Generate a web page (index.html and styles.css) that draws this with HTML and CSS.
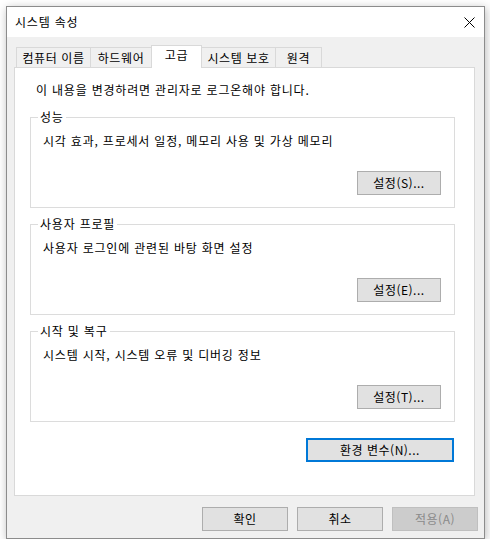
FILE: index.html
```html
<!DOCTYPE html>
<html lang="ko">
<head>
<meta charset="utf-8">
<title>시스템 속성</title>
<link rel="stylesheet" href="styles.css">
</head>
<body>
<div class="window">
  <div class="titlebar">
    <span class="title">시스템 속성</span>
    <svg class="close" width="11" height="11" viewBox="0 0 11 11" aria-hidden="true">
      <path d="M0.5 0.5 L10.5 10.5 M10.5 0.5 L0.5 10.5" stroke="#000" stroke-width="1" fill="none"/>
    </svg>
  </div>
  <div class="body">
    <div class="tabs">
      <div class="tab tab--w1">컴퓨터 이름</div>
      <div class="tab tab--w2">하드웨어</div>
      <div class="tab tab--w3 tab--active">고급</div>
      <div class="tab tab--w4">시스템 보호</div>
      <div class="tab tab--w5">원격</div>
    </div>
    <div class="panel">
      <p class="intro">이 내용을 변경하려면 관리자로 로그온해야 합니다.</p>
      <div class="group group--first">
        <div class="group-title">성능</div>
        <div class="group-desc">시각 효과, 프로세서 일정, 메모리 사용 및 가상 메모리</div>
        <button class="btn group-btn">설정(S)...</button>
      </div>
      <div class="group">
        <div class="group-title">사용자 프로필</div>
        <div class="group-desc">사용자 로그인에 관련된 바탕 화면 설정</div>
        <button class="btn group-btn">설정(E)...</button>
      </div>
      <div class="group">
        <div class="group-title">시작 및 복구</div>
        <div class="group-desc">시스템 시작, 시스템 오류 및 디버깅 정보</div>
        <button class="btn group-btn">설정(T)...</button>
      </div>
      <div class="env-row">
        <button class="btn btn--focus env-btn">환경 변수(N)...</button>
      </div>
    </div>
  </div>
  <div class="footer">
    <button class="btn footer-btn">확인</button>
    <button class="btn footer-btn">취소</button>
    <button class="btn footer-btn btn--disabled">적용(A)</button>
  </div>
</div>
</body>
</html>
```

FILE: styles.css
```css
body {
  margin: 0;
  background: #ffffff;
  font-family: "Noto Sans CJK KR", "Noto Sans", sans-serif;
  font-size: 12px;
  letter-spacing: 0.8px;
  color: #000;
}

.window {
  box-sizing: border-box;
  width: 479px;
  height: 533px;
  margin: 6px 0 0 6px;
  border: 1px solid #8c8c8c;
  background: #f0f0f0;
  box-shadow: 1px 2px 9px rgba(0, 0, 0, 0.28);
  display: flex;
  flex-direction: column;
}

.titlebar {
  height: 30px;
  background: #fff;
  display: flex;
  align-items: center;
  justify-content: space-between;
  padding: 0 9px 0 8px;
  flex: 0 0 auto;
}

.title {
  line-height: 16px;
}

.close {
  display: block;
}

.body {
  display: flex;
  flex-direction: column;
  padding: 8px 9px 0 7px;
}

.tabs {
  display: flex;
  align-items: flex-end;
  height: 22px;
  margin-left: 2px;
}

.tab {
  box-sizing: border-box;
  height: 20px;
  border: 1px solid #d9d9d9;
  border-bottom: none;
  background: #f0f0f0;
  line-height: 19px;
  text-align: center;
  white-space: nowrap;
  letter-spacing: 0.6px;
}

.tab + .tab {
  margin-left: -1px;
}

.tab--w1 { width: 75px; }
.tab--w2 { width: 62px; }
.tab--w3 { width: 51px; }
.tab--w4 { width: 75px; }
.tab--w5 { width: 47px; }

.tab--active {
  height: 23px;
  margin-bottom: -1px;
  background: #fff;
  line-height: 17px;
  position: relative;
  z-index: 1;
}

.panel {
  box-sizing: border-box;
  height: 429px;
  background: #fff;
  border: 1px solid #d9d9d9;
  padding: 14px 19px 0 15px;
}

.intro {
  margin: 0 0 0 6px;
  line-height: 16px;
}

.group {
  box-sizing: border-box;
  height: 91px;
  margin-top: 16px;
  border: 1px solid #dcdcdc;
  display: flex;
  flex-direction: column;
  align-items: flex-start;
  padding: 0 13px 12px 12px;
}

.group--first {
  margin-top: 19px;
}

.group-title {
  margin: -9px 0 0 -5px;
  padding: 0 2px;
  background: #fff;
  line-height: 16px;
}

.group-desc {
  margin-top: 8px;
  line-height: 16px;
}

.btn {
  font: inherit;
  letter-spacing: 0.5px;
  box-sizing: border-box;
  height: 24px;
  line-height: 16px;
  padding: 0;
  background: #e1e1e1;
  border: 1px solid #adadad;
  color: #000;
}

.group-btn {
  width: 84px;
  margin-top: auto;
  align-self: flex-end;
}

.env-row {
  display: flex;
  justify-content: flex-end;
  margin: 16px 1px 0 0;
}

.env-btn {
  width: 148px;
}

.btn--focus {
  border: 2px solid #0078d7;
}

.footer {
  display: flex;
  justify-content: flex-end;
  gap: 9px;
  padding: 11px 6px 0 0;
}

.footer-btn {
  width: 86px;
}

.btn--disabled {
  background: #cccccc;
  border-color: #bfbfbf;
  color: #8a8a8a;
}
```
